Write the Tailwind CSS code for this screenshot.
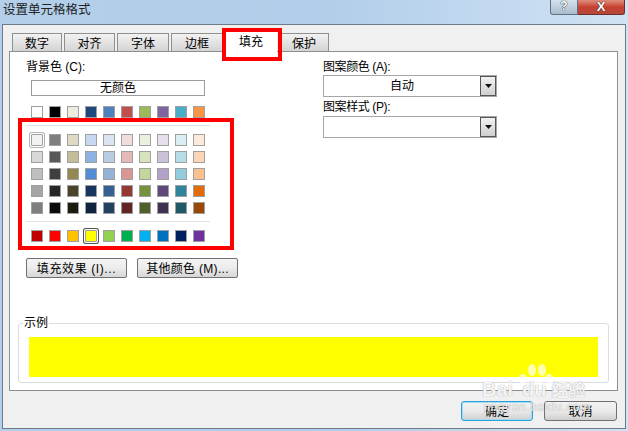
<!DOCTYPE html>
<html lang="zh-CN">
  <head>
    <meta charset="UTF-8" />
    <script src="https://cdn.jsdelivr.net/npm/@tailwindcss/browser@4"></script>
    <title>设置单元格格式</title>
  </head>
  <body class="w-[628px] h-[431px] overflow-hidden relative bg-gradient-to-r from-[#b3cfe9] via-[#b0cde9] to-[#d0e2f4] text-[12px] leading-[14px] text-black font-['Liberation_Sans','Noto_Sans_CJK_SC',sans-serif]">
    <!-- Title bar -->
    <div class="h-[24px] flex justify-between pl-[3px] pr-[3px]">
      <div class="text-[12.5px] leading-[20px] text-[#222]">设置单元格格式</div>
      <div class="flex h-[15px]">
        <div class="w-[28px] border border-t-0 border-[#5f7183] rounded-bl-[3px] bg-gradient-to-b from-[#d5e2ef] to-[#a9bccf] flex justify-center text-[12px] leading-[13px] text-white font-bold [text-shadow:0_0_1px_#222,0_0_1px_#222]">?</div>
        <div class="w-[47px] border border-t-0 border-l-0 border-[#6e2f29] rounded-br-[3px] bg-gradient-to-b from-[#dc8d7e] via-[#c8402f] to-[#b5483a] flex justify-center text-[13px] leading-[13px] text-white font-bold [text-shadow:0_0_1px_#222,0_0_1px_#222]">X</div>
      </div>
    </div>

    <!-- Dialog body -->
    <div class="ml-[2px] w-[624px] h-[405px] border border-[#6c7b8a] bg-[#f0f0f0] pt-[8px] pl-[6px]">
      <!-- Tabs -->
      <div class="flex h-[18px] pl-[3px] gap-[2px] items-end">
        <div class="w-[50px] h-[18px] border border-b-0 border-[#8e8f8f] bg-gradient-to-b from-[#f2f2f2] to-[#d4d4d4] text-center leading-[21px]">数字</div>
        <div class="w-[51px] h-[18px] border border-b-0 border-[#8e8f8f] bg-gradient-to-b from-[#f2f2f2] to-[#d4d4d4] text-center leading-[21px]">对齐</div>
        <div class="w-[52px] h-[18px] border border-b-0 border-[#8e8f8f] bg-gradient-to-b from-[#f2f2f2] to-[#d4d4d4] text-center leading-[21px]">字体</div>
        <div class="w-[52px] h-[18px] border border-b-0 border-[#8e8f8f] bg-gradient-to-b from-[#f2f2f2] to-[#d4d4d4] text-center leading-[21px]">边框</div>
        <div class="w-[52px] h-[20px] bg-white text-center leading-[20px] -mb-px z-10">填充</div>
        <div class="w-[50px] h-[18px] border border-b-0 border-[#8e8f8f] bg-gradient-to-b from-[#f2f2f2] to-[#d4d4d4] text-center leading-[21px]">保护</div>
      </div>

      <!-- Tab panel -->
      <div class="w-[609px] h-[340px] border border-[#8e8f8f] bg-white">
        <div class="flex h-[271px]">
          <!-- Background colour -->
          <div class="w-[313px] pl-[16px] pt-[8px]">
            <div class="h-[14px]">背景色 (C):</div>
            <div class="ml-[5px] mt-[6px] w-[174px] h-[16px] border border-[#9c9c9c] text-center leading-[15px]">无颜色</div>

            <div class="ml-[5px] mt-[10px] flex gap-[6px]">
              <div class="w-3 h-3 border border-[#a0a0a0] bg-[#ffffff]"></div>
              <div class="w-3 h-3 border border-[#a0a0a0] bg-[#000000]"></div>
              <div class="w-3 h-3 border border-[#a0a0a0] bg-[#eeece1]"></div>
              <div class="w-3 h-3 border border-[#a0a0a0] bg-[#1f497d]"></div>
              <div class="w-3 h-3 border border-[#a0a0a0] bg-[#4f81bd]"></div>
              <div class="w-3 h-3 border border-[#a0a0a0] bg-[#c0504d]"></div>
              <div class="w-3 h-3 border border-[#a0a0a0] bg-[#9bbb59]"></div>
              <div class="w-3 h-3 border border-[#a0a0a0] bg-[#8064a2]"></div>
              <div class="w-3 h-3 border border-[#a0a0a0] bg-[#4bacc6]"></div>
              <div class="w-3 h-3 border border-[#a0a0a0] bg-[#f79646]"></div>
            </div>

            <div class="mt-[7px] w-[184px] h-px bg-[#e3e3e3]"></div>

            <div class="ml-[5px] mt-[8px] grid grid-cols-[repeat(10,12px)] gap-x-[6px] gap-y-[5px]">
              <div class="w-3 h-3 border border-[#a0a0a0] bg-[#f2f2f2] shadow-[0_0_0_1px_#fff,0_0_0_2px_#b4b4b4] rounded-[1px]"></div>
              <div class="w-3 h-3 border border-[#a0a0a0] bg-[#7f7f7f]"></div>
              <div class="w-3 h-3 border border-[#a0a0a0] bg-[#ddd9c3]"></div>
              <div class="w-3 h-3 border border-[#a0a0a0] bg-[#c6d9f0]"></div>
              <div class="w-3 h-3 border border-[#a0a0a0] bg-[#dbe5f1]"></div>
              <div class="w-3 h-3 border border-[#a0a0a0] bg-[#f2dcdb]"></div>
              <div class="w-3 h-3 border border-[#a0a0a0] bg-[#ebf1dd]"></div>
              <div class="w-3 h-3 border border-[#a0a0a0] bg-[#e5e0ec]"></div>
              <div class="w-3 h-3 border border-[#a0a0a0] bg-[#dbeef3]"></div>
              <div class="w-3 h-3 border border-[#a0a0a0] bg-[#fdeada]"></div>

              <div class="w-3 h-3 border border-[#a0a0a0] bg-[#d8d8d8]"></div>
              <div class="w-3 h-3 border border-[#a0a0a0] bg-[#595959]"></div>
              <div class="w-3 h-3 border border-[#a0a0a0] bg-[#c4bd97]"></div>
              <div class="w-3 h-3 border border-[#a0a0a0] bg-[#8db3e2]"></div>
              <div class="w-3 h-3 border border-[#a0a0a0] bg-[#b8cce4]"></div>
              <div class="w-3 h-3 border border-[#a0a0a0] bg-[#e5b9b7]"></div>
              <div class="w-3 h-3 border border-[#a0a0a0] bg-[#d7e3bc]"></div>
              <div class="w-3 h-3 border border-[#a0a0a0] bg-[#ccc1d9]"></div>
              <div class="w-3 h-3 border border-[#a0a0a0] bg-[#b7dde8]"></div>
              <div class="w-3 h-3 border border-[#a0a0a0] bg-[#fbd5b5]"></div>

              <div class="w-3 h-3 border border-[#a0a0a0] bg-[#bfbfbf]"></div>
              <div class="w-3 h-3 border border-[#a0a0a0] bg-[#3f3f3f]"></div>
              <div class="w-3 h-3 border border-[#a0a0a0] bg-[#938953]"></div>
              <div class="w-3 h-3 border border-[#a0a0a0] bg-[#548dd4]"></div>
              <div class="w-3 h-3 border border-[#a0a0a0] bg-[#95b3d7]"></div>
              <div class="w-3 h-3 border border-[#a0a0a0] bg-[#d99694]"></div>
              <div class="w-3 h-3 border border-[#a0a0a0] bg-[#c3d69b]"></div>
              <div class="w-3 h-3 border border-[#a0a0a0] bg-[#b2a2c7]"></div>
              <div class="w-3 h-3 border border-[#a0a0a0] bg-[#92cddc]"></div>
              <div class="w-3 h-3 border border-[#a0a0a0] bg-[#fac08f]"></div>

              <div class="w-3 h-3 border border-[#a0a0a0] bg-[#a5a5a5]"></div>
              <div class="w-3 h-3 border border-[#a0a0a0] bg-[#262626]"></div>
              <div class="w-3 h-3 border border-[#a0a0a0] bg-[#494429]"></div>
              <div class="w-3 h-3 border border-[#a0a0a0] bg-[#17365d]"></div>
              <div class="w-3 h-3 border border-[#a0a0a0] bg-[#366092]"></div>
              <div class="w-3 h-3 border border-[#a0a0a0] bg-[#953734]"></div>
              <div class="w-3 h-3 border border-[#a0a0a0] bg-[#76923c]"></div>
              <div class="w-3 h-3 border border-[#a0a0a0] bg-[#5f497a]"></div>
              <div class="w-3 h-3 border border-[#a0a0a0] bg-[#31859b]"></div>
              <div class="w-3 h-3 border border-[#a0a0a0] bg-[#e36c09]"></div>

              <div class="w-3 h-3 border border-[#a0a0a0] bg-[#7f7f7f]"></div>
              <div class="w-3 h-3 border border-[#a0a0a0] bg-[#0c0c0c]"></div>
              <div class="w-3 h-3 border border-[#a0a0a0] bg-[#1d1b10]"></div>
              <div class="w-3 h-3 border border-[#a0a0a0] bg-[#0f243e]"></div>
              <div class="w-3 h-3 border border-[#a0a0a0] bg-[#244061]"></div>
              <div class="w-3 h-3 border border-[#a0a0a0] bg-[#632423]"></div>
              <div class="w-3 h-3 border border-[#a0a0a0] bg-[#4f6128]"></div>
              <div class="w-3 h-3 border border-[#a0a0a0] bg-[#3f3151]"></div>
              <div class="w-3 h-3 border border-[#a0a0a0] bg-[#205867]"></div>
              <div class="w-3 h-3 border border-[#a0a0a0] bg-[#974806]"></div>
            </div>

            <div class="mt-[7px] w-[184px] h-px bg-[#e3e3e3]"></div>

            <div class="ml-[5px] mt-[8px] flex gap-[6px]">
              <div class="w-3 h-3 border border-[#a0a0a0] bg-[#c00000]"></div>
              <div class="w-3 h-3 border border-[#a0a0a0] bg-[#ff0000]"></div>
              <div class="w-3 h-3 border border-[#a0a0a0] bg-[#ffc000]"></div>
              <div class="w-3 h-3 border border-[#a0a0a0] bg-[#ffff00] shadow-[0_0_0_1px_#fff,0_0_0_2px_#555] rounded-[1px]"></div>
              <div class="w-3 h-3 border border-[#a0a0a0] bg-[#92d050]"></div>
              <div class="w-3 h-3 border border-[#a0a0a0] bg-[#00b050]"></div>
              <div class="w-3 h-3 border border-[#a0a0a0] bg-[#00b0f0]"></div>
              <div class="w-3 h-3 border border-[#a0a0a0] bg-[#0070c0]"></div>
              <div class="w-3 h-3 border border-[#a0a0a0] bg-[#002060]"></div>
              <div class="w-3 h-3 border border-[#a0a0a0] bg-[#7030a0]"></div>
            </div>

            <div class="mt-[16px] flex gap-[10px]">
              <div class="w-[101px] h-[20px] border border-[#707070] rounded-[2px] bg-gradient-to-b from-[#f4f4f4] via-[#ececec] to-[#d6d6d6] text-center leading-[20px] tracking-[0.6px]">填充效果 (I)...</div>
              <div class="w-[101px] h-[20px] border border-[#707070] rounded-[2px] bg-gradient-to-b from-[#f4f4f4] via-[#ececec] to-[#d6d6d6] text-center leading-[20px] tracking-[0.3px]">其他颜色 (M)...</div>
            </div>
          </div>

          <!-- Pattern -->
          <div class="w-[174px] pt-[8px]">
            <div class="h-[14px] tracking-[-0.4px]">图案颜色 (A):</div>
            <div class="mt-[1px] h-[22px] border border-[#a6a6a6] flex">
              <div class="flex-1 text-center leading-[21px]">自动</div>
              <div class="w-[16px] border border-[#555] bg-gradient-to-b from-[#f2f2f2] to-[#cfcfcf] flex items-center justify-center">
                <svg width="7" height="4" viewBox="0 0 7 4"><path d="M0 0h7L3.5 4z" fill="#111" /></svg>
              </div>
            </div>
            <div class="mt-[3px] h-[14px] tracking-[-0.4px]">图案样式 (P):</div>
            <div class="mt-[2px] h-[22px] border border-[#a6a6a6] flex">
              <div class="flex-1"></div>
              <div class="w-[16px] border border-[#555] bg-gradient-to-b from-[#f2f2f2] to-[#cfcfcf] flex items-center justify-center">
                <svg width="7" height="4" viewBox="0 0 7 4"><path d="M0 0h7L3.5 4z" fill="#111" /></svg>
              </div>
            </div>
          </div>
        </div>

        <!-- Sample -->
        <div class="ml-[8px] w-[591px] h-[60px] border border-[#d5dfe5] rounded-[3px] relative px-[10px] pt-[13px]">
          <div class="absolute left-[4px] -top-[8px] bg-white px-[1px]">示例</div>
          <div class="h-[40px] bg-[#ffff00]"></div>
        </div>
      </div>

      <!-- Dialog buttons -->
      <div class="mt-[10px] ml-[452px] flex gap-[11px]">
        <div class="w-[72px] h-[20px] border border-[#2f9fd8] rounded-[3px] bg-gradient-to-b from-[#f2f2f2] via-[#ebebeb] to-[#cfcfcf] shadow-[inset_0_0_0_1px_#9fdcf5] text-center leading-[20px]">确定</div>
        <div class="w-[73px] h-[20px] border border-[#707070] rounded-[3px] bg-gradient-to-b from-[#f2f2f2] via-[#ebebeb] to-[#cfcfcf] text-center leading-[20px]">取消</div>
      </div>
    </div>

    <!-- Red annotation boxes -->
    <div class="absolute left-[222px] top-[28px] w-[60px] h-[33px] border-4 border-[#ff0000] z-20"></div>
    <div class="absolute left-[18px] top-[118px] w-[216px] h-[132px] border-4 border-[#ff0000] z-20"></div>

    <!-- Watermark -->
    <div class="absolute left-[482px] top-[362px] w-[116px] h-[54px] z-30">
      <svg class="absolute left-[36px] top-0" width="36" height="34" viewBox="0 0 36 34" fill="#ffffff" fill-opacity="0.7">
        <ellipse cx="5" cy="17" rx="4" ry="5" />
        <ellipse cx="14" cy="8" rx="4" ry="6" />
        <ellipse cx="24" cy="8" rx="4" ry="6" />
        <ellipse cx="31" cy="17" rx="4" ry="5" />
        <ellipse cx="18" cy="25" rx="9" ry="7" />
      </svg>
      <div class="absolute left-0 top-[16px] text-[20px] leading-[22px] font-bold text-white/90 whitespace-nowrap [text-shadow:0_0_1px_#8a8a8a]">Bai<span class="ml-[9px]">du</span><span class="text-[17px] ml-[5px]">经验</span></div>
      <div class="absolute left-[2px] top-[38px] text-[12px] leading-[14px] text-white/80 whitespace-nowrap tracking-[0.6px] [text-shadow:0_0_1px_#8a8a8a]">jingyan.baidu.com</div>
    </div>
  </body>
</html>
